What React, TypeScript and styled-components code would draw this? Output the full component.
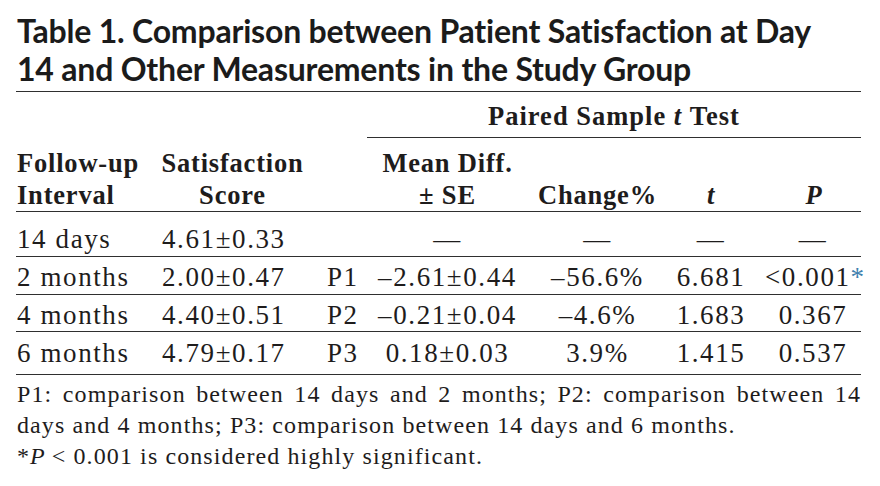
import * as React from "react";
import styled, { createGlobalStyle } from "styled-components";

const GlobalStyle = createGlobalStyle`
  html, body {
    margin: 0;
    padding: 0;
    background: #ffffff;
  }
`;

const COLS = "134px 165px 52px 161px 139px 88px 106px";
const INK = "#1e1c1c";
const RULE = "#2f2f2f";

const Page = styled.div`
  width: 845px;
  padding: 12px 19px 0 16px;
  color: ${INK};
  font-family: "Liberation Serif", "Times New Roman", serif;
`;

const Title = styled.h1`
  margin: 0 0 3px 1px;
  font-family: Lato, "Noto Sans", sans-serif;
  font-weight: 700;
  font-size: 32px;
  line-height: 38px;
  letter-spacing: -0.2px;
  color: #1b1b1b;
`;

const Table = styled.div`
  border-top: 1.5px solid ${RULE};
  border-bottom: 1.5px solid ${RULE};
`;

const Row = styled.div<{ $h: number; $pt?: number; $rule?: boolean }>`
  display: grid;
  grid-template-columns: ${COLS};
  height: ${(p) => p.$h}px;
  padding-top: ${(p) => p.$pt ?? 0}px;
  box-sizing: border-box;
  align-items: center;
  border-bottom: ${(p) => (p.$rule ? `1.5px solid ${RULE}` : "none")};
  font-size: 27px;
  letter-spacing: 1.6px;
`;

const HeadRow = styled(Row)`
  align-items: end;
  padding-bottom: 0;
  font-size: 26.5px;
  font-weight: 700;
  line-height: 32px;
  letter-spacing: 0.8px;
`;

const SpanRow = styled.div`
  display: grid;
  grid-template-columns: 351px 494px;
  height: 46px;
`;

const SpanCell = styled.div`
  grid-column: 2;
  display: flex;
  align-items: center;
  justify-content: center;
  padding-top: 3px;
  box-sizing: border-box;
  border-bottom: 1.5px solid ${RULE};
  font-size: 26.5px;
  font-weight: 700;
  letter-spacing: 1px;
`;

const Cell = styled.div<{ $align?: "left" | "center"; $pl?: number }>`
  text-align: ${(p) => p.$align ?? "center"};
  padding-left: ${(p) => p.$pl ?? 0}px;
  white-space: nowrap;
`;

const Em = styled.i`
  font-style: italic;
`;

const Star = styled.span`
  color: #3f7fae;
`;

const Notes = styled.div`
  padding: 4px 0 0 1px;
  font-size: 24px;
  line-height: 31px;
  letter-spacing: 1.1px;
  text-align: justify;
`;

const NoteLine = styled.p`
  margin: 0;
`;

type DataRow = {
  interval: string;
  score: string;
  label: string;
  diff: string;
  change: string;
  t: string;
  p: React.ReactNode;
};

const rows: DataRow[] = [
  { interval: "14 days", score: "4.61±0.33", label: "", diff: "—", change: "—", t: "—", p: "—" },
  {
    interval: "2 months",
    score: "2.00±0.47",
    label: "P1",
    diff: "–2.61±0.44",
    change: "–56.6%",
    t: "6.681",
    p: (
      <>
        &lt;0.001<Star>*</Star>
      </>
    ),
  },
  { interval: "4 months", score: "4.40±0.51", label: "P2", diff: "–0.21±0.04", change: "–4.6%", t: "1.683", p: "0.367" },
  { interval: "6 months", score: "4.79±0.17", label: "P3", diff: "0.18±0.03", change: "3.9%", t: "1.415", p: "0.537" },
];

// row heights and top offsets, read off the printed table
const heights = [45, 38, 37, 42];
const offsets = [11, 4, 4, 1];

const App = () => {
  return (
    <>
      <GlobalStyle />
      <Page>
        <Title>
          Table 1. Comparison between Patient Satisfaction at Day
          <br />
          14 and Other Measurements in the Study Group
        </Title>
        <Table>
          <SpanRow>
            <SpanCell>
              Paired Sample&nbsp;<Em>t</Em>&nbsp;Test
            </SpanCell>
          </SpanRow>
          <HeadRow $h={74} $rule>
            <Cell $align="left" $pl={1}>
              Follow-up
              <br />
              Interval
            </Cell>
            <Cell>
              Satisfaction
              <br />
              Score
            </Cell>
            <Cell />
            <Cell>
              Mean Diff.
              <br />± SE
            </Cell>
            <Cell>Change%</Cell>
            <Cell>
              <Em>t</Em>
            </Cell>
            <Cell $pl={12}>
              <Em>P</Em>
            </Cell>
          </HeadRow>
          {rows.map((r, i) => (
            <Row key={r.interval} $h={heights[i]} $pt={offsets[i]} $rule={i < rows.length - 1}>
              <Cell $align="left" $pl={1}>
                {r.interval}
              </Cell>
              <Cell $align="left" $pl={12}>
                {r.score}
              </Cell>
              <Cell $align="left" $pl={12}>
                {r.label}
              </Cell>
              <Cell>{r.diff}</Cell>
              <Cell>{r.change}</Cell>
              <Cell>{r.t}</Cell>
              <Cell $pl={10}>{r.p}</Cell>
            </Row>
          ))}
        </Table>
        <Notes>
          <NoteLine>
            P1: comparison between 14 days and 2 months; P2: comparison between 14 days and 4 months; P3: comparison
            between 14 days and 6 months.
          </NoteLine>
          <NoteLine>
            *<Em>P</Em>&thinsp;&lt; 0.001 is considered highly significant.
          </NoteLine>
        </Notes>
      </Page>
    </>
  );
};

export default App;
